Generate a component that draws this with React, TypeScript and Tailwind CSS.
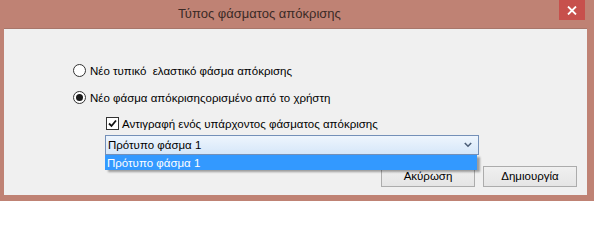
import React from "react";

const font = { fontFamily: '"Liberation Sans", Arial, sans-serif' };

function Radio({ checked }: { checked?: boolean }) {
  return (
    <div className="w-[13px] h-[13px] rounded-full border border-[#333] bg-white flex items-center justify-center shrink-0">
      {checked && <div className="w-[7px] h-[7px] rounded-full bg-[#1a1a1a]" />}
    </div>
  );
}

export default function App() {
  return (
    <div
      className="w-[594px] h-[201px] bg-[#bf8274] flex flex-col overflow-hidden text-[11.5px] text-black"
      style={font}
    >
      {/* Title bar */}
      <div className="relative h-[28px] shrink-0 flex items-start">
        <div className="ml-[178px] mt-[4px] text-[13px] leading-[20px] text-[#3b2a26]">
          Τύπος φάσματος απόκρισης
        </div>
        <div className="absolute left-[559px] top-0 w-[26px] h-[20px] bg-[#c7504c] flex items-center justify-center">
          <svg width="10" height="9" viewBox="0 0 10 9">
            <path d="M1 0.5 L9 8.5 M9 0.5 L1 8.5" stroke="white" strokeWidth="1.8" />
          </svg>
        </div>
      </div>

      {/* Body */}
      <div className="relative ml-[4px] mr-[7px] mb-[6px] flex-1 bg-[#f0f0f0] flex flex-col border-t border-[#a8766a]">
        <div className="flex items-center mt-[35px] ml-[69px] h-[13px]">
          <Radio />
          <span className="ml-[4px] leading-[14px]">Νέο τυπικό&nbsp; ελαστικό φάσμα απόκρισης</span>
        </div>
        <div className="flex items-center mt-[14px] ml-[69px] h-[13px]">
          <Radio checked />
          <span className="ml-[4px] leading-[14px]">Νέο φάσμα απόκρισηςορισμένο από το χρήστη</span>
        </div>
        <div className="flex items-center mt-[13px] ml-[102px] h-[13px]">
          <div className="w-[13px] h-[13px] border border-[#333] bg-white flex items-center justify-center shrink-0">
            <svg width="9" height="9" viewBox="0 0 9 9">
              <path d="M1 4.5 L3.5 7 L8 1.5" stroke="#111" strokeWidth="1.8" fill="none" />
            </svg>
          </div>
          <span className="ml-[3px] leading-[14px]">Αντιγραφή ενός υπάρχοντος φάσματος απόκρισης</span>
        </div>

        {/* Select */}
        <div className="relative mt-[5px] ml-[101px] w-[374px] h-[20px] border border-[#7490b8] bg-gradient-to-b from-[#eef5fd] to-[#d6e7f9] flex items-center">
          <span className="ml-[2px] leading-[14px]">Πρότυπο φάσμα 1</span>
          <svg className="ml-auto mr-[6px]" width="8" height="6" viewBox="0 0 8 6">
            <path d="M0.8 1 L4 4.2 L7.2 1" stroke="#4d5f78" strokeWidth="1.6" fill="none" />
          </svg>
          {/* Dropdown list */}
          <div className="absolute left-[-1px] top-[19px] w-[372px] h-[15px] bg-[#3399ff] text-white flex items-center shadow-[3px_2px_2px_rgba(0,0,0,0.35)] z-10">
            <span className="ml-[2px] leading-[14px]">Πρότυπο φάσμα 1</span>
          </div>
        </div>

        {/* Buttons */}
        <div className="flex mt-[11px] ml-[377px] gap-[8px]">
          <div className="w-[94px] h-[21px] border border-[#acacac] bg-gradient-to-b from-[#f0f0f0] to-[#e5e5e5] flex items-center justify-center">
            Ακύρωση
          </div>
          <div className="w-[94px] h-[21px] border border-[#acacac] bg-gradient-to-b from-[#f0f0f0] to-[#e5e5e5] flex items-center justify-center">
            Δημιουργία
          </div>
        </div>
      </div>
    </div>
  );
}
